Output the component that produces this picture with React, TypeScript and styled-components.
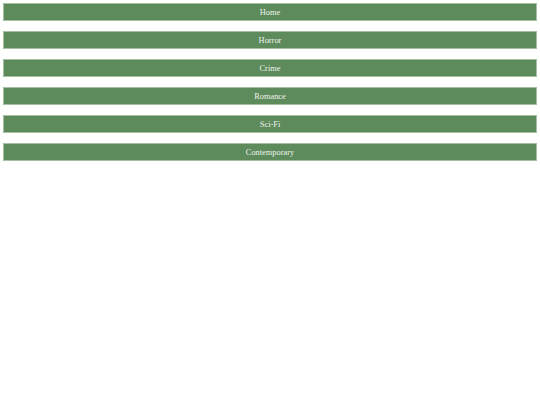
import styled, { createGlobalStyle } from "styled-components";

const GlobalStyle = createGlobalStyle`
  html, body {
    margin: 0;
    padding: 0;
    background: #ffffff;
  }
`;

const genres = ["Home", "Horror", "Crime", "Romance", "Sci-Fi", "Contemporary"];

const App = () => {
  return (
    <>
      <GlobalStyle />
      <Nav>
        {genres.map((g) => (
          <NavButton key={g}>{g}</NavButton>
        ))}
      </Nav>
    </>
  );
};

const Nav = styled.nav`
  display: flex;
  flex-direction: column;
  gap: 10px;
  padding: 3px;
`;
const NavButton = styled.button`
  display: flex;
  align-items: center;
  justify-content: center;
  height: 18px;
  width: 100%;
  margin: 0;
  padding: 0;
  border: 1px solid #a7c0a5;
  background: #5e8b5b;
  color: #eef2ee;
  font-family: "Liberation Serif", "Times New Roman", serif;
  font-size: 8.4px;
  cursor: pointer;
`;

export default App;
